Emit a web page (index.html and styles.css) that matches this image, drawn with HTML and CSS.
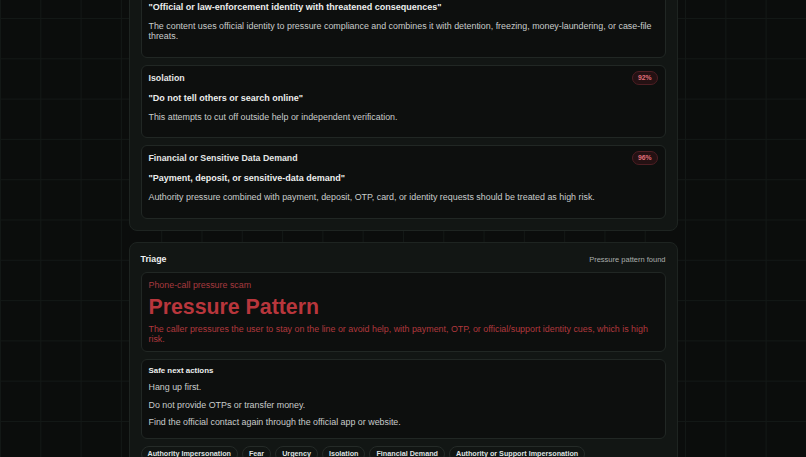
FILE: index.html
```html
<!DOCTYPE html>
<html lang="en">
<head>
<meta charset="utf-8">
<title>Scam Check</title>
<link rel="stylesheet" href="styles.css">
</head>
<body>
<main class="page">
  <section class="panel">
    <header class="panel-head">
      <h2 class="panel-title">Signals</h2>
      <span class="panel-note">5 matched</span>
    </header>
    <article class="card">
      <div class="card-head">
        <h3 class="card-title">Authority Impersonation</h3>
        <span class="badge">94%</span>
      </div>
      <p class="quote">"Official or law-enforcement identity with threatened consequences"</p>
      <p class="desc">The content uses official identity to pressure compliance and combines it with detention, freezing, money-laundering, or case-file threats.</p>
    </article>
    <article class="card">
      <div class="card-head">
        <h3 class="card-title">Isolation</h3>
        <span class="badge">92%</span>
      </div>
      <p class="quote">"Do not tell others or search online"</p>
      <p class="desc">This attempts to cut off outside help or independent verification.</p>
    </article>
    <article class="card">
      <div class="card-head">
        <h3 class="card-title">Financial or Sensitive Data Demand</h3>
        <span class="badge">96%</span>
      </div>
      <p class="quote">"Payment, deposit, or sensitive-data demand"</p>
      <p class="desc">Authority pressure combined with payment, deposit, OTP, card, or identity requests should be treated as high risk.</p>
    </article>
  </section>

  <section class="panel">
    <header class="panel-head">
      <h2 class="panel-title">Triage</h2>
      <span class="panel-note">Pressure pattern found</span>
    </header>
    <article class="card verdict">
      <p class="verdict-kind">Phone-call pressure scam</p>
      <p class="verdict-title">Pressure Pattern</p>
      <p class="verdict-desc">The caller pressures the user to stay on the line or avoid help, with payment, OTP, or official/support identity cues, which is high risk.</p>
    </article>
    <article class="card actions">
      <h3 class="actions-title">Safe next actions</h3>
      <ul class="action-list">
        <li>Hang up first.</li>
        <li>Do not provide OTPs or transfer money.</li>
        <li>Find the official contact again through the official app or website.</li>
      </ul>
    </article>
    <ul class="chips">
      <li class="chip">Authority Impersonation</li>
      <li class="chip">Fear</li>
      <li class="chip">Urgency</li>
      <li class="chip">Isolation</li>
      <li class="chip">Financial Demand</li>
      <li class="chip">Authority or Support Impersonation</li>
    </ul>
  </section>
</main>
</body>
</html>
```

FILE: styles.css
```css
* {
  box-sizing: border-box;
}

html,
body {
  margin: 0;
  padding: 0;
}

body {
  background-color: #0b0d0c;
  background-image:
    linear-gradient(to right, #131816 1px, transparent 1px),
    linear-gradient(to bottom, #131816 1px, transparent 1px);
  background-size: 40.3px 40.3px;
  background-position: 0 18px;
  color: #c9cccb;
  font-family: "Liberation Sans", Arial, sans-serif;
  font-size: 8.9px;
  line-height: 10.4px;
  min-height: 100vh;
  overflow: hidden;
}

.page {
  width: 549px;
  margin: -57px auto 0;
  display: flex;
  flex-direction: column;
  gap: 11px;
}

.panel {
  background: #121614;
  border: 1px solid #1e2421;
  border-radius: 8px;
  padding: 11.5px 11px 11px;
  display: flex;
  flex-direction: column;
  gap: 7px;
}

.panel-head {
  display: flex;
  justify-content: space-between;
  align-items: baseline;
}

.panel-title {
  margin: 0;
  font-size: 8.8px;
  font-weight: 700;
  color: #eef0ef;
}

.panel-note {
  font-size: 7.5px;
  color: #a9adab;
}

.card {
  background: #0d0f0e;
  border: 1px solid #212724;
  border-radius: 6px;
  padding: 5px 7px 15px;
}

.card-head {
  display: flex;
  justify-content: space-between;
  align-items: center;
  min-height: 14px;
}

.card-title {
  margin: 0;
  font-size: 8.8px;
  font-weight: 700;
  color: #e6e8e7;
}

.badge {
  display: inline-flex;
  align-items: center;
  height: 14px;
  padding: 0 5px;
  border-radius: 7px;
  border: 1px solid #4e1e23;
  background: #241113;
  color: #e0707a;
  font-size: 6.8px;
  font-weight: 700;
}

.quote {
  margin: 8px 0 0;
  font-size: 9px;
  line-height: 11px;
  font-weight: 700;
  color: #eceeed;
}

.desc {
  margin: 8px 0 0;
  color: #c9cccb;
}

.verdict {
  padding: 7px 7px 7px;
  color: #b0383d;
}

.verdict p {
  margin: 0;
}

.verdict-kind {
  color: #a7393e;
}

.verdict-title {
  margin-top: 5px !important;
  font-size: 21.3px;
  line-height: 23px;
  font-weight: 700;
  color: #b8363c;
}

.verdict-desc {
  margin-top: 5px !important;
  line-height: 10px;
  color: #b0383d;
}

.actions {
  padding: 6.5px 7px 11px;
}

.actions-title {
  margin: 0;
  font-size: 7.9px;
  line-height: 9.4px;
  font-weight: 700;
  color: #eceeed;
}

.action-list {
  list-style: none;
  margin: 6.5px 0 0;
  padding: 0;
  display: flex;
  flex-direction: column;
  gap: 7px;
}

.chips {
  list-style: none;
  margin: 0;
  padding: 0;
  display: flex;
  flex-wrap: wrap;
  gap: 4px;
}

.chip {
  height: 16px;
  padding: 0 6px;
  display: inline-flex;
  align-items: center;
  border-radius: 8px;
  border: 1px solid #252b28;
  background: #111513;
  color: #dfe1e0;
  font-size: 7.2px;
  font-weight: 700;
}
```
